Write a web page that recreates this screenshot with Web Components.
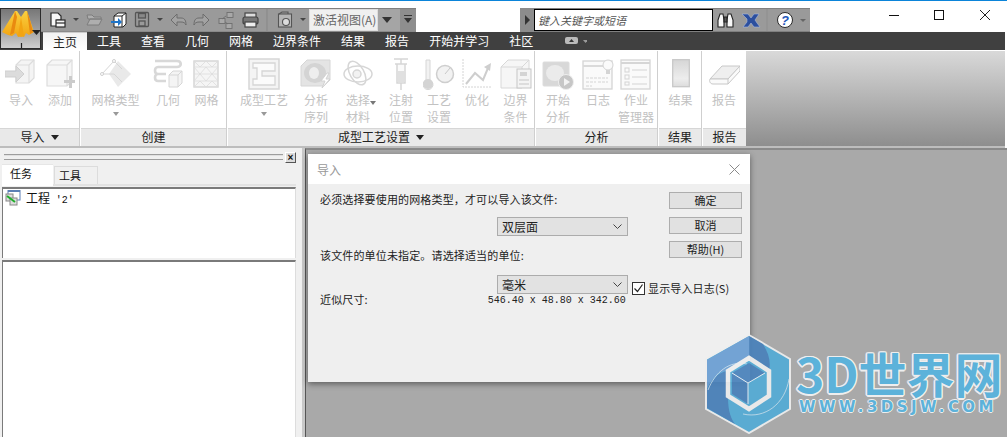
<!DOCTYPE html>
<html><head><meta charset="utf-8"><title>导入</title>
<style>
html,body{margin:0;padding:0;height:437px;overflow:hidden;background:#fff;font:12px "Noto Sans CJK SC","Liberation Sans",sans-serif;}
svg{display:block;flex:none}
</style></head><body>
<moldflow-app>
  <title-strip>
    <app-button slot="app"></app-button>
    <svg slot="qat" width="375" height="24" viewBox="41 8 375 24">
      <g fill="#f6f6f6" stroke="#2a2a2a" stroke-width="1.200"><path d="M51 13h7l3 3v4h-4v6h-6z"/><rect x="56" y="20" width="9" height="7"/><path d="M56 23h9" fill="none"/></g><path d="M73 18h6l-3 3z" fill="#444"/>
      <path d="M87 15h5l2 2h7v2h-13zM87 25l3-6h12l-3 6z" fill="#aeaeae" stroke="#7c7c7c"/>
      <path d="M114 16l4-3h8v11l-3 3h-9z" fill="#fff" stroke="#222"/><path d="M122 16h-8M122 16v11M122 16l4-3" stroke="#222" fill="none"/><path d="M111 21h7v-3l4 4-4 4v-3h-7z" fill="#1f75c9"/>
      <g fill="none" stroke="#555" stroke-width="1.300"><rect x="135.500" y="12.500" width="13" height="14" rx="1"/><rect x="138.500" y="13.500" width="7" height="4.500" fill="#888"/><rect x="139" y="21" width="6" height="5"/></g><path d="M157 18h6l-3 3z" fill="#444"/>
      <path d="M171 20l6-6v4h4c4 0 5 3 5 7-1-2-2-3-5-3h-4v4z" fill="#a2a2a2" stroke="#6c6c6c" stroke-width="1"/>
      <path d="M209 20l-6-6v4h-4c-4 0-5 3-5 7 1-2 2-3 5-3h4v4z" fill="#a2a2a2" stroke="#6c6c6c" stroke-width="1"/>
      <g fill="#a8a8a8" stroke="#6f6f6f" stroke-width=".9"><rect x="227" y="12.500" width="6" height="5"/><rect x="219" y="18.500" width="6" height="5"/><rect x="226" y="23.500" width="6" height="5"/><path d="M226 16l-4 3M225 22l3 2"/></g>
      <g stroke="#444" stroke-width="1.200"><rect x="245" y="13" width="11" height="5" fill="#ddd"/><rect x="243" y="17" width="15" height="7" rx="2" fill="#777"/><rect x="245" y="22" width="11" height="5" fill="#eee"/></g>
      <path d="M267 9v22" stroke="#878787"/>
      <g stroke="#555" fill="#b5b5b5" stroke-width="1.100"><rect x="278.500" y="14" width="13" height="13"/><path d="M279 14l3-2h6v2" fill="none"/><circle cx="286" cy="22" r="3.500" fill="#ddd"/></g><path d="M300 18h6l-3 3z" fill="#444"/>
    </svg>
    <view-combo slot="qat">激活视图(A)</view-combo>
    <search-strip slot="search"></search-strip>
    <window-controls slot="win"></window-controls>
  </title-strip>
  <ribbon-tabs>
    <ribbon-tab active>主页</ribbon-tab><ribbon-tab>工具</ribbon-tab><ribbon-tab>查看</ribbon-tab><ribbon-tab>几何</ribbon-tab><ribbon-tab>网格</ribbon-tab><ribbon-tab>边界条件</ribbon-tab><ribbon-tab>结果</ribbon-tab><ribbon-tab>报告</ribbon-tab><ribbon-tab>开始并学习</ribbon-tab><ribbon-tab>社区</ribbon-tab>
    <svg slot="extra" width="24" height="18" viewBox="0 0 24 18"><rect x="2" y="5" width="13" height="7" rx="2" fill="#bbb"/><path d="M6 10l2.500-3 2.500 3z" fill="#333"/><path d="M20 8h5l-2.500 3z" fill="#999"/></svg>
  </ribbon-tabs>
  <ribbon-bar>
    <ribbon-group w="80" label="导入" menu>
      <ribbon-btn w="40" style="margin-left:1px" label="导入"><svg width="32" height="32" viewBox="0 0 32 32"><g fill="#f4f4f4" stroke="#dcdcdc" stroke-width="1.200"><path d="M11 7l5-5h13v18l-5 5H11z"/><path d="M11 7h13v18M24 7l5-5" fill="none"/></g><path d="M0 13h11V8l8 8-8 8v-5H0z" fill="#dcdcdc" stroke="#cfcfcf"/></svg></ribbon-btn>
      <ribbon-btn w="38" label="添加"><svg width="32" height="32" viewBox="0 0 32 32"><g fill="#f6f6f6" stroke="#dcdcdc" stroke-width="1.200"><path d="M3 7l5-5h20v21l-5 5H3z"/><path d="M3 7h20v21M23 7l5-5" fill="none"/></g><path d="M20 22h5v-4h3v4h3v3h-3v5h-3v-5h-5z" fill="#cbcbcb"/></svg></ribbon-btn>
    </ribbon-group>
    <ribbon-group w="146" label="创建">
      <ribbon-btn w="67" style="margin-left:1px" label="网格类型" caret><svg width="32" height="32" viewBox="0 0 32 32"><path d="M18 3L31 16 18 29 9 16z" fill="#e9e9e9"/><path d="M2 16L14 3l8 8M2 16h12l8 8" fill="none" stroke="#d6d6d6"/><circle cx="14" cy="3" r="1.500" fill="#fff" stroke="#cfcfcf"/><circle cx="2" cy="16" r="1.500" fill="#fff" stroke="#cfcfcf"/></svg></ribbon-btn>
      <ribbon-btn w="38" label="几何"><svg width="32" height="32" viewBox="0 0 32 32"><path d="M3 3h22c5 0 5 6 0 6H6c-4 0-4 7 0 7h8M6 16c-4 0-4 7 0 7h8" fill="none" stroke="#d8d8d8" stroke-width="2.600"/><path d="M17 17l4-4h9v12l-4 4h-9z" fill="#f4f4f4" stroke="#d6d6d6"/><path d="M17 17h9v12M26 17l4-4" fill="none" stroke="#d6d6d6"/></svg></ribbon-btn>
      <ribbon-btn w="39" label="网格"><svg width="32" height="32" viewBox="0 0 32 32"><rect x="3" y="3" width="24" height="26" fill="#f5f5f5" stroke="#d4d4d4" stroke-width="1.400"/><path d="M3 9h24M3 16h24M3 23h24M3 9l6 7 6-7 6 7 6-7M3 23l6-7 6 7 6-7 6 7M3 3l6 6 6-6 6 6 6-6M3 29l6-6 6 6 6-6 6 6" fill="none" stroke="#dcdcdc" stroke-width=".8"/></svg></ribbon-btn>
    </ribbon-group>
    <ribbon-group w="307" label="成型工艺设置" menu>
      <ribbon-btn w="68" style="margin-left:2px" label="成型工艺" caret><svg width="32" height="32" viewBox="0 0 32 32"><rect x="1" y="1" width="30" height="30" fill="#f4f4f4" stroke="#d6d6d6" stroke-width="1.500"/><path d="M5 5h22v8H14v5h13v9H5v-6h4v-11H5z" fill="#fbfbfb" stroke="#d6d6d6" stroke-width="1.300"/></svg></ribbon-btn>
      <ribbon-btn w="36" label="分析|序列"><svg width="32" height="32" viewBox="0 0 32 32"><path d="M1 8l6-6h23v20l-6 6H1z" fill="#e4e4e4" stroke="#d6d6d6"/><ellipse cx="15" cy="15" rx="11" ry="10" fill="#d4d4d4"/><ellipse cx="14" cy="15" rx="5" ry="6" fill="#eee"/><path d="M27 15l-6 8h4l-3 7 8-9h-4l3-6z" fill="#fff" stroke="#d2d2d2"/></svg></ribbon-btn>
      <ribbon-btn w="48" label="选择|材料" sidecaret><svg width="32" height="32" viewBox="0 0 32 32"><g fill="none" stroke="#d6d6d6" stroke-width="1.500"><ellipse cx="16" cy="16" rx="14" ry="8"/><ellipse cx="15" cy="15" rx="7" ry="13" transform="rotate(-30 15 15)"/><circle cx="15" cy="16" r="4" fill="#f2f2f2"/></g></svg></ribbon-btn>
      <ribbon-btn w="38" label="注射|位置"><svg width="32" height="32" viewBox="0 0 32 32"><path d="M9 1h14M16 1v5M10 6h12M12 6h8v19h-8zM16 25v7" fill="#fafafa" stroke="#d6d6d6" stroke-width="1.500"/><rect x="13" y="13" width="6" height="11" fill="#e0e0e0"/></svg></ribbon-btn>
      <ribbon-btn w="38" label="工艺|设置"><svg width="32" height="32" viewBox="0 0 32 32"><path d="M5 2h4v20a5 5 0 1 1-4 0z" fill="#f2f2f2" stroke="#d6d6d6" transform="translate(-2 0)"/><circle cx="5" cy="26" r="5" fill="#d4d4d4"/><circle cx="22" cy="16" r="8.500" fill="#f2f2f2" stroke="#cecece" stroke-width="1.500"/><path d="M22 16l5-6" stroke="#c8c8c8"/></svg></ribbon-btn>
      <ribbon-btn w="38" label="优化"><svg width="32" height="32" viewBox="0 0 32 32"><path d="M2 1v28h29" fill="none" stroke="#d4d4d4" stroke-dasharray="2 1"/><path d="M5 26l9-11 8 7 5-12" fill="none" stroke="#cecece" stroke-width="2"/><path d="M23 9l7-4-1 8z" fill="#cecece"/></svg></ribbon-btn>
      <ribbon-btn w="39" label="边界|条件"><svg width="32" height="32" viewBox="0 0 32 32"><path d="M1 9l7-7h21v21l-7 7H1z" fill="#f6f6f6" stroke="#d8d8d8"/><path d="M1 9h21v21M22 9l7-7" fill="none" stroke="#d8d8d8"/><rect x="17" y="11" width="14" height="19" fill="#f4f4f4" stroke="#c6c6c6"/><rect x="20" y="14" width="7" height="4" fill="#d4d4d4"/><path d="M19 22h10M19 26h10" stroke="#c6c6c6"/></svg></ribbon-btn>
    </ribbon-group>
    <ribbon-group w="122" label="分析">
      <ribbon-btn w="44" label="开始|分析"><svg width="32" height="32" viewBox="0 0 32 32"><rect x="1" y="4" width="26" height="24" rx="1" fill="#d8d8d8" stroke="#dcdcdc"/><ellipse cx="13" cy="15" rx="9" ry="8" fill="#ebebeb"/><circle cx="24" cy="24" r="7.500" fill="#c6c6c6" stroke="#eee"/><path d="M22 20v8l6-4z" fill="#f2f2f2"/></svg></ribbon-btn>
      <ribbon-btn w="36" label="日志"><svg width="32" height="32" viewBox="0 0 32 32"><rect x="1" y="3" width="29" height="28" fill="#fafafa" stroke="#d4d4d4" stroke-width="1.300"/><path d="M1 8h29" stroke="#dadada" stroke-width="2"/><path d="M4 20h22M4 24h10M16 24h10M4 28h6" stroke="#d4d4d4" stroke-dasharray="3 1"/><circle cx="26" cy="7" r="5" fill="#fafafa" stroke="#d4d4d4"/><rect x="24" y="12" width="4" height="4" fill="#d4d4d4"/></svg></ribbon-btn>
      <ribbon-btn w="40" label="作业|管理器"><svg width="32" height="32" viewBox="0 0 32 32"><rect x="1" y="2" width="29" height="29" fill="#fafafa" stroke="#d4d4d4" stroke-width="1.300"/><path d="M1 5h29" stroke="#d6d6d6" stroke-width="2"/><g fill="none" stroke="#d4d4d4"><rect x="5" y="10" width="4" height="4"/><rect x="5" y="17" width="4" height="4"/><rect x="5" y="24" width="4" height="3"/><path d="M12 12h15M12 19h15M12 26h15"/></g></svg></ribbon-btn>
    </ribbon-group>
    <ribbon-group w="43" label="结果">
      <ribbon-btn w="43" label="结果"><svg width="18" height="30" viewBox="0 0 18 30"><defs><linearGradient id="rg" x1="0" y1="0" x2="0" y2="1"><stop offset="0" stop-color="#d6d6d6"/><stop offset=".7" stop-color="#ededed"/><stop offset="1" stop-color="#dcdcdc"/></linearGradient></defs><rect x=".7" y=".7" width="16.600" height="27" fill="url(#rg)" stroke="#c8c8c8" stroke-width="1.300"/></svg></ribbon-btn>
    </ribbon-group>
    <ribbon-group w="43" label="报告" last>
      <ribbon-btn w="42" label="报告"><svg width="32" height="24" viewBox="0 0 32 24"><path d="M2 17L14 4h18L20 17z" fill="#efefef" stroke="#c8c8c8"/><path d="M2 17h18v5H5c-3 0-4-3-3-5zM20 17l12-13v5L20 22" fill="#fafafa" stroke="#c8c8c8"/></svg></ribbon-btn>
    </ribbon-group>
    <ribbon-fill></ribbon-fill>
  </ribbon-bar>
  <work-area>
    <side-panel slot="side"></side-panel>
    <import-dialog slot="over"></import-dialog>
    <site-mark slot="over"></site-mark>
  </work-area>
</moldflow-app>
<script>
function def(name, html, extra){
  customElements.define(name, class extends HTMLElement{
    constructor(){super();const r=this.attachShadow({mode:'open'});r.innerHTML=typeof html==='function'?html(this):html;}
    connectedCallback(){if(extra)extra(this)}
  });
}
const FONT='"Noto Sans CJK SC","Liberation Sans",sans-serif';
def('moldflow-app',`<style>:host{display:block;position:relative;width:1007px;height:437px;overflow:hidden;font:12px ${FONT}}</style><slot></slot>`);
def('title-strip',`<style>
:host{display:block;height:32px;box-sizing:border-box;position:relative;background:#fff;border-top:1px solid #0b84d9}
.row{display:flex;height:24px;margin-top:7px;align-items:stretch}
.qat{display:flex;width:375px;margin-left:41px;background:#9a9a9a;box-shadow:inset 0 1px #808080,inset 0 -1px #8a8a8a;position:relative}
.search{margin-left:104px;width:290px;display:flex}
.win{margin-left:auto}
.app{position:absolute;left:0;top:7px;z-index:3}
</style>
<div class="app"><slot name="app"></slot></div>
<div class="row"><div class="qat"><slot name="qat"></slot></div><div class="search"><slot name="search"></slot></div><div class="win"><slot name="win"></slot></div></div>`);
def('app-button',`<style>:host{display:block;width:41px;height:41px;box-sizing:border-box;border:1px solid #2c2c2c;background:linear-gradient(#777,#9c9c9c 50%,#cfcfcf)}svg{display:block}</style>
<svg width="39" height="39" viewBox="0 0 39 39"><defs><linearGradient id="ly" x1="0" y1="0" x2="0" y2="1"><stop offset="0" stop-color="#f9d040"/><stop offset="1" stop-color="#f2a412"/></linearGradient></defs>
<path d="M1 23L14 2h2l4 6 4-6h2l7 21-5 3-3-2-2 4-3-1-3 1-2-4-4 3-4-1z" fill="url(#ly)"/><path d="M14 2L9 26l4-2 3-16zM26 2l3 23 3-2-3-12z" fill="#e98a10"/><path d="M20 8l-3 19 3 1 3-1z" fill="#f2a412"/><path d="M31 21h9l-4.500 5z" fill="#222"/><path d="M20.500 34v5" stroke="#222" stroke-width="1.200"/></svg>`);
def('view-combo',`<style>:host{display:flex;position:absolute;left:268px;top:1px;height:22px;width:107px;box-sizing:border-box;font:12px ${FONT};color:#666}
.t{width:69px;background:#f0f0f0;border:1px solid #ddd;box-sizing:border-box;line-height:20px;padding-left:3px;white-space:nowrap;overflow:hidden}
.a{width:22px;background:#a5a5a5;position:relative}.a i{position:absolute;left:4px;top:8px;border:5px solid transparent;border-top:6px solid #333;border-bottom:0}
.m{width:16px;background:#8e8e8e;position:relative}.m i{position:absolute;left:4px;top:9px;border:4px solid transparent;border-top:5px solid #333;border-bottom:0}.m b{position:absolute;left:4px;top:6px;width:8px;height:1px;background:#333}</style>
<div class="t"><slot></slot></div><div class="a"><i></i></div><div class="m"><b></b><i></i></div>`);
def('search-strip',`<style>:host{display:flex;width:290px;height:24px;background:#9a9a9a;box-shadow:inset 0 1px #808080,inset 0 -1px #808080;font:italic 11px ${FONT};color:#555;align-items:stretch}
.a{width:14px;position:relative;background:#8c8c8c}.a i{position:absolute;left:5px;top:7px;border:5px solid transparent;border-left:5px solid #333;border-right:0}
.i{width:179px;background:#fff;border:1px solid #000;box-sizing:border-box;line-height:20px;padding-left:3px;margin:1px 0;height:22px;white-space:nowrap}
.c{display:flex;align-items:center;flex:1}svg{display:block}</style>
<div class="a"><i></i></div><div class="i">键入关键字或短语</div>
<div class="c"><svg width="97" height="24" viewBox="713 8 97 24"><g fill="#f8f8f8" stroke="#222" stroke-width="1.100"><path d="M718 20l2-6h3l1 6v7h-6z"/><path d="M727 20l1-6h3l2 6v7h-6z"/><path d="M724 17h3v5h-3z" fill="#555"/></g><path d="M742 14h6l3 4 3-4h5l-2 3-2 3 2 3 3 4h-6l-3-4-3 4h-5l4-5v-3l-2-2z" fill="#2c4f9e" stroke="#a9b9dd" stroke-width=".6"/><path d="M767 9v22" stroke="#8e8e8e"/><circle cx="785" cy="20" r="7.500" fill="#fff" stroke="#2a2a2a"/><text x="785" y="25" text-anchor="middle" font-family="Liberation Sans" font-size="13" font-weight="700" fill="#2356b8">?</text><path d="M800 19h6l-3 3z" fill="#666"/></svg></div>`);
def('window-controls',`<style>:host{display:block;width:197px;height:24px}svg{display:block}</style>
<svg width="197" height="24" viewBox="810 8 197 24"><path d="M889 15.500h10" stroke="#111"/><rect x="934.500" y="10.500" width="9" height="9" fill="none" stroke="#111"/><path d="M980 10l10 10M990 10l-10 10" stroke="#222"/></svg>`);
def('ribbon-tabs',`<style>:host{display:flex;height:18px;width:1005px;background:#404040;padding-left:43px;box-sizing:border-box;align-items:stretch;position:relative}
.x{margin-left:20px;display:block}</style><slot></slot><div class="x"><slot name="extra"></slot></div>`);
def('ribbon-tab',t=>`<style>:host{display:block;padding:0 10px;color:#fff;font:12px/18px ${FONT};white-space:nowrap;margin-right:0}
:host([active]){background:linear-gradient(#f2f2f2,#fff);color:#222;border-top:1px solid #ccc;box-sizing:border-box;line-height:17px}</style><slot></slot>`);
def('ribbon-bar',`<style>:host{display:flex;height:98px;width:1005px;background:#fff;border-bottom:2px solid #bdbdbd;box-sizing:border-box;padding-top:1px;align-items:stretch}</style><slot></slot>`);
def('ribbon-group',t=>{
  const w=t.getAttribute('w'),m=t.hasAttribute('menu');
  return `<style>:host{display:flex;flex-direction:column;flex:none;width:${w}px;box-sizing:border-box;border-right:${t.hasAttribute('last')?'0':'1px solid #cfcfcf'};margin-right:${t.hasAttribute('last')?'0':'1px'};font:12px ${FONT}}
  .b{flex:1;display:flex;align-items:flex-start}
  .l{height:18px;background:#e9e9e9;border-top:1px solid #d6d6d6;text-align:center;line-height:16px;color:#222;box-sizing:border-box}
  .l i{display:inline-block;border:4px solid transparent;border-top:5px solid #222;border-bottom:0;margin-left:6px;vertical-align:2px}</style>
  <div class="b"><slot></slot></div><div class="l">${t.getAttribute('label')}${m?'<i></i>':''}</div>`;
});
def('ribbon-btn',t=>{
  const [a,b]=t.getAttribute('label').split('|');
  return `<style>:host{display:flex;flex-direction:column;align-items:center;flex:none;width:${t.getAttribute('w')}px;color:#c2c2c2;font:12px/17px ${FONT};height:77px;position:relative;white-space:nowrap}
  .ic{height:34px;margin-top:6px;display:flex;align-items:center;justify-content:center;margin-bottom:0}
  .t{margin-top:0;text-align:center}
  .c{border:3px solid transparent;border-top:4px solid #999;border-bottom:0;display:block;width:0;margin:4px auto 0}
  .s{position:absolute;right:6px;top:50px;border:3px solid transparent;border-top:4px solid #777;border-bottom:0}</style>
  <div class="ic"><slot></slot></div><div class="t">${a}${b?'<br>'+b:''}</div>${t.hasAttribute('caret')?'<i class="c"></i>':''}${t.hasAttribute('sidecaret')?'<i class="s"></i>':''}`;
});
def('ribbon-fill',`<style>:host{display:block;flex:1;background:linear-gradient(#d9d9d9,#8e8e8e)}</style>`);
def('work-area',`<style>:host{display:flex;position:relative;height:289px;background:#a9a9a9}
.s{width:305px;flex:none}.m{flex:1;border-left:1px solid #555;border-top:2px solid #8a8a8a}</style>
<div class="s"><slot name="side"></slot></div><div class="m"></div><slot name="over"></slot>`);
def('side-panel',`<style>:host{display:flex;flex-direction:column;height:289px;background:#f0f0f0;box-sizing:border-box;padding:3px 6px 0 2px;font:12px ${FONT};color:#111;border-right:3px solid #c8c8c8}
.h{display:flex;align-items:center;height:12px;padding-left:2px;gap:2px}
.g{flex:1;height:4px;border-top:1px solid #9d9d9d;border-bottom:1px solid #9d9d9d;box-shadow:inset 0 1px #e0e0e0}
.x{width:11px;height:11px;box-sizing:border-box;border:1px solid;border-color:#fff #555 #555 #fff;background:#dcdcdc;font:bold 10px/9px "Liberation Sans",sans-serif;text-align:center}
.tabs{display:flex;box-sizing:border-box;height:22px;margin-top:1px;align-items:flex-end;border-bottom:2px solid #e2e2e2}
.t{box-sizing:border-box;font-size:11px;letter-spacing:0}
.t1{width:51px;background:#fff;padding:0 0 0 8px;margin-bottom:-2px;height:22px;border-top:1px solid #e6e6e6}
.t2{width:44px;height:18px;margin-left:1px;background:#f0f0f0;border:1px solid #dcdcdc;border-bottom:0;padding-left:4px;line-height:16px}
.b{background:#fff;border:1px solid #7a7a7a;border-width:2px 1px 0 1px;border-right-color:#ddd;box-sizing:border-box}
.b1{height:71px;margin-top:1px;display:flex;gap:5px;padding:0 0 0 2px;line-height:17px;align-items:flex-start}
.b2{flex:1;margin-top:2px}svg{display:block}</style>
<div class="h"><div class="g"></div><div class="x">×</div></div>
<div class="tabs"><div class="t t1">任务</div><div class="t t2">工具</div></div>
<div class="b b1"><svg width="16" height="16" viewBox="0 0 16 16" style="margin-top:1px"><rect x="3" y="0" width="12" height="10" fill="#fff" stroke="#5c7fb5"/><path d="M3 1h12" stroke="#5c7fb5" stroke-width="2"/><rect x="1" y="4" width="7" height="7" fill="#ddd" stroke="#888"/><rect x="5" y="8" width="7" height="7" fill="#ddd" stroke="#888"/><path d="M2 6l8 6" stroke="#1fae2a" stroke-width="2"/></svg><span>工程 <span style="font:10px 'Liberation Mono';margin-left:3px">'2'</span></span></div>
<div class="b b2"></div>`);
def('import-dialog',`<style>:host{position:absolute;left:308px;top:6px;width:442px;height:228px;background:#efefef;box-shadow:0 2px 6px rgba(0,0,0,.45);font:11px/15px ${FONT};color:#222;display:block}
.title{height:30px;background:#fff;display:flex;align-items:center;justify-content:space-between;padding:0 10px 0 9px;color:#999;font-size:12px;box-sizing:border-box}
.top{display:grid;grid-template-columns:349px 73px;padding:8px 0 0 12px}
.lbl{letter-spacing:.15px;white-space:nowrap;height:15px}
.cb{box-sizing:border-box;width:131px;height:19px;background:#e2e2e2;border:1px solid #acacac;margin-left:177px;display:flex;align-items:center;justify-content:space-between;padding:0 5px 0 4px;font-size:12px;flex:none}
.side{display:flex;flex-direction:column;gap:8px}
.btn{box-sizing:border-box;height:17px;border:1px solid #adadad;background:#e1e1e1;text-align:center;line-height:15px}
.btn.n{margin-bottom:-1px}
.low{padding:12px 0 0 12px}
.chk{display:flex;align-items:center;gap:3px;margin-left:4px;margin-top:6px;white-space:nowrap;letter-spacing:.15px}
.box{width:13px;height:13px;border:1px solid #333;background:#fff;box-sizing:border-box}
.r{display:flex;align-items:flex-start}
.dims{font:10px/12px "Liberation Mono",monospace;margin-left:120px;white-space:pre;margin-top:2px}
.d{line-height:12px;white-space:nowrap;letter-spacing:.15px}svg{display:block}</style>
<div class="title"><span>导入</span><svg width="11" height="11" viewBox="0 0 11 11"><path d="M.5.500l10 10M10.500.500l-10 10" stroke="#8a8a8a"/></svg></div>
<div class="top"><div>
<div class="lbl">必须选择要使用的网格类型，才可以导入该文件:</div>
<div class="cb" style="margin-top:10px"><span>双层面</span><svg width="9" height="5" viewBox="0 0 9 5"><path d="M.5.500l4 4 4-4" fill="none" stroke="#444"/></svg></div>
<div class="lbl" style="margin-top:12px">该文件的单位未指定。请选择适当的单位:</div>
</div><div class="side"><div class="btn">确定</div><div class="btn n">取消</div><div class="btn">帮助(H)</div></div></div>
<div class="low"><div class="r"><div class="cb"><span>毫米</span><svg width="9" height="5" viewBox="0 0 9 5"><path d="M.5.500l4 4 4-4" fill="none" stroke="#444"/></svg></div>
<div class="chk"><div class="box"><svg width="11" height="11" viewBox="0 0 11 11"><path d="M1.500 5.500l3 3 5-7" fill="none" stroke="#222" stroke-width="1.200"/></svg></div><span>显示导入日志(S)</span></div></div>
<div class="r" style="margin-top:-3px"><div class="d">近似尺寸:</div><div class="dims">546.40 x 48.80 x 342.60</div></div></div>`);
def('site-mark',`<style>:host{position:absolute;left:705px;top:186px;width:302px;height:100px;display:flex;font-family:${FONT};pointer-events:none}
svg{display:block;flex:none}
.t{margin-left:5px;display:flex;flex-direction:column;color:#5cb2da}
.a{font:700 48px/42px ${FONT};margin-top:17px;white-space:nowrap;text-shadow:1.500px 0 #eee,-1.500px 0 #eee,0 1.500px #eee,0 -1.500px #eee,1px 1px #eee,-1px -1px #eee,1px -1px #eee,-1px 1px #eee}
.b{font:bold 15px/14px "DejaVu Sans",sans-serif;letter-spacing:3.450px;margin:7px 0 0 3px;white-space:nowrap;text-shadow:1px 0 #eee,-1px 0 #eee,0 1px #eee,0 -1px #eee}</style>
<svg width="86" height="100" viewBox="0 0 86 100" style="opacity:.93">
<path d="M44 1L85 25V75L44 99 1 75V25z" fill="#55acd6" stroke="#eee" stroke-width="2"/>
<path d="M44 2L2 26V55C8 42 16 36 23 37L44 24z" fill="#6a9ed2"/>
<path d="M44 2L58 10C64 20 66 28 64 37L44 24z" fill="#4a82bb"/>
<path d="M2 55V74L30 90C24 82 23 72 23 62V37C14 38 7 44 2 55z" fill="#4a82bb"/>
<path d="M3 56C10 38 25 26 42 30M84 45C80 70 60 85 38 80" fill="none" stroke="#cfe3ef" stroke-width=".8"/>
<path d="M44 29L60 39 43 49 27 39z" fill="#4a82bb"/><path d="M27 39L43 49V70L27 60z" fill="#4a82bb"/><path d="M60 39L43 49V70L60 60z" fill="#55acd6"/>
<path d="M44 24L64 37V62L44 75 23 62V37z" fill="none" stroke="#eee" stroke-width="4.500"/>
<path d="M27 39L43 49 60 39M43 49V70" fill="none" stroke="#e6eef5" stroke-width="1"/>
</svg>
<div class="t"><div class="a">3D世界网</div><div class="b">WWW.3DSJW.COM</div></div>`);
</script>
</body></html>
